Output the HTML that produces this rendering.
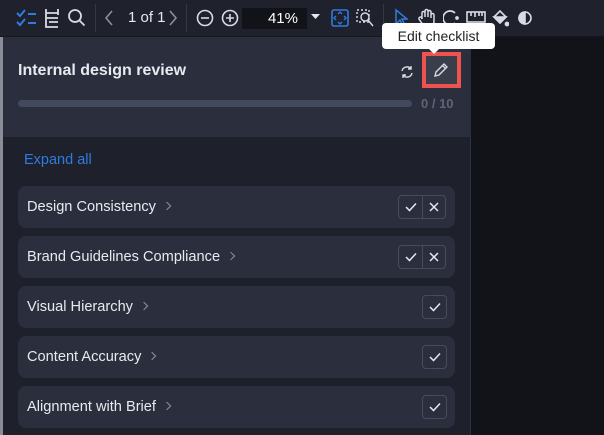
<!DOCTYPE html>
<html><head><style>
*{margin:0;padding:0;box-sizing:border-box}
body{width:604px;height:435px;overflow:hidden;background:#111318;font-family:"Liberation Sans",sans-serif;position:relative;color:#e6e8ee}
.tb{position:absolute;left:0;top:0;width:604px;height:37px;background:#1f222c;border-bottom:1px solid #15171d}
.sep{position:absolute;top:4px;width:1px;height:28px;background:#333847}
.ic{position:absolute;top:8px}
.panel{position:absolute;left:3px;top:37px;width:468px;height:398px;background:#1e212b;border-right:1px solid #2e3240}
.lstrip{position:absolute;left:0;top:37px;width:3px;height:398px;background:#8a8d95}
.hdr{position:absolute;left:0;top:0;width:468px;height:100px;background:#2b2f3d}
.title{position:absolute;left:15px;top:25px;font-size:16px;font-weight:bold;color:#e8eaf0}
.bar{position:absolute;left:15px;top:63px;width:394px;height:7px;border-radius:4px;background:#434a5e}
.cnt{position:absolute;left:418px;top:59px;font-size:13px;font-weight:bold;color:#5d6477}
.exp{position:absolute;left:21px;top:115px;font-size:14.5px;color:#2f7be0}
.card{position:absolute;left:15px;width:437px;height:42px;border-radius:8px;background:#2b2f3d}
.card span{position:absolute;left:9px;top:13px;font-size:14.6px;color:#e8eaf0}
.card span:after{content:"";display:inline-block;width:5px;height:5px;border-right:1.3px solid #8a90a0;border-top:1.3px solid #8a90a0;transform:rotate(45deg);margin-left:8px;position:relative;top:-2px}
.bg{position:absolute;top:9px;height:24px;border:1px solid #474c5a;border-radius:4px;display:flex}
.bg div{width:23px;height:22px;display:flex;align-items:center;justify-content:center}
.bg div+div{border-left:1px solid #474c5a}
.tip{position:absolute;left:382px;top:23px;width:113px;height:26px;background:#fff;border-radius:4px;color:#222;font-size:14px;text-align:center;line-height:26px}
.tip:after{content:"";position:absolute;left:47px;bottom:-5px;border:5px solid transparent;border-top-color:#fff;border-bottom:0}
.red{position:absolute;left:422px;top:52px;width:39px;height:36px;border:4px solid #ef5350;background:#3a3e4b}
</style></head><body>
<div class="tb">
<svg class="ic" style="left:16px" width="22" height="20" viewBox="0 0 22 20" fill="none" stroke="#2f7be0" stroke-width="2"><path d="M1 5l3 3 5-6M1 14l3 3 5-6M12 6h8M12 15h8"/></svg>
<svg class="ic" style="left:44px" width="16" height="20" viewBox="0 0 16 20" fill="none" stroke="#d8dbe3" stroke-width="1.8"><path d="M2 1v18h12M2 5h12M2 10h12M14 1v6M5 14h9"/></svg>
<svg class="ic" style="left:68px" width="18" height="20" viewBox="0 0 18 20" fill="none" stroke="#d8dbe3" stroke-width="1.8"><circle cx="7" cy="8" r="6"/><path d="M11.5 12.5l5 5"/></svg>
<div class="sep" style="left:95px"></div>
<svg class="ic" style="left:104px" width="10" height="20" viewBox="0 0 10 20" fill="none" stroke="#8a8f9c" stroke-width="1.6"><path d="M8 3L2 10l6 7"/></svg>
<div style="position:absolute;left:128px;top:9px;font-size:15px;color:#e6e8ee">1 of 1</div>
<svg class="ic" style="left:168px" width="10" height="20" viewBox="0 0 10 20" fill="none" stroke="#8a8f9c" stroke-width="1.6"><path d="M2 3l6 7-6 7"/></svg>
<div class="sep" style="left:186px"></div>
<svg class="ic" style="left:196px" width="18" height="20" viewBox="0 0 18 20" fill="none" stroke="#d8dbe3" stroke-width="1.6"><circle cx="9" cy="10" r="7.5"/><path d="M5 10h8"/></svg>
<svg class="ic" style="left:221px" width="18" height="20" viewBox="0 0 18 20" fill="none" stroke="#d8dbe3" stroke-width="1.6"><circle cx="9" cy="10" r="7.5"/><path d="M5 10h8M9 6v8"/></svg>
<div style="position:absolute;left:242px;top:8px;width:65px;height:21px;background:#111318;color:#fff;font-size:15px;text-align:right;padding-right:9px;line-height:21px">41%</div>
<svg class="ic" style="left:311px;top:14px" width="9" height="6"><path d="M0 0h9L4.5 5z" fill="#e6e8ee"/></svg>
<svg class="ic" style="left:331px" width="18" height="20" viewBox="0 0 18 20" fill="none" stroke="#2f7be0" stroke-width="1.6"><rect x="1" y="2" width="16" height="16" rx="2"/><path d="M7 6l2-2 2 2M7 14l2 2 2-2M5 8l-2 2 2 2M13 8l2 2-2 2" stroke-width="1.3"/></svg>
<svg class="ic" style="left:356px" width="18" height="20" viewBox="0 0 18 20" fill="none" stroke="#d8dbe3" stroke-width="1.4"><rect x="1" y="2" width="12" height="12" stroke-dasharray="2 2"/><circle cx="9" cy="9" r="4"/><path d="M12 12l5 6"/></svg>
<div class="sep" style="left:383px"></div>
<svg class="ic" style="left:394px" width="14" height="20" viewBox="0 0 14 20" fill="none" stroke="#2f7be0" stroke-width="1.5"><path d="M2 2v14l4-4 3 6 2-1-3-6h5z"/></svg>
<svg class="ic" style="left:418px" width="18" height="20" viewBox="0 0 18 20" fill="none" stroke="#d8dbe3" stroke-width="1.5"><path d="M4 11V5a1.5 1.5 0 013 0v4V3a1.5 1.5 0 013 0v6V4a1.5 1.5 0 013 0v6V7a1.5 1.5 0 013 0v6c0 4-3 6-6 6s-5-2-7-5l-2-3a1.5 1.5 0 012.5-1.5z"/></svg>
<svg class="ic" style="left:443px" width="16" height="20" viewBox="0 0 16 20" fill="none" stroke="#d8dbe3" stroke-width="1.7"><path d="M12 5A7 7 0 1012 15" /><circle cx="14" cy="10" r="1" fill="#d8dbe3"/></svg>
<svg class="ic" style="left:466px;top:11px" width="20" height="12" viewBox="0 0 20 12" fill="none" stroke="#d8dbe3" stroke-width="1.6"><rect x="1" y="1" width="18" height="10"/><path d="M5 1v4M9 1v5M13 1v4M16 1v4"/></svg>
<svg class="ic" style="left:491px" width="18" height="20" viewBox="0 0 18 20" fill="none" stroke="#d8dbe3" stroke-width="1.6"><path d="M3 9l6-6 6 6-6 6z"/><path d="M3 9h12l-6 6z" fill="#d8dbe3"/><circle cx="16" cy="16" r="1.6" fill="#d8dbe3"/></svg>
<svg class="ic" style="left:517px" width="16" height="20" viewBox="0 0 16 20" fill="none" stroke="#d8dbe3" stroke-width="1.6"><circle cx="8" cy="10" r="6"/><path d="M8 4a6 6 0 000 12z" fill="#d8dbe3"/></svg>
</div>
<div class="lstrip"></div>
<div class="panel">
<div class="hdr">
<div class="title">Internal design review</div>
<svg style="position:absolute;left:397px;top:28px" width="14" height="14" viewBox="0 0 14 14" fill="none" stroke="#d8dbe3" stroke-width="1.4"><path d="M2 6a5 5 0 019-2M12 8a5 5 0 01-9 2M11 1v3H8M3 13v-3h3"/></svg>
<div class="bar"></div>
<div class="cnt">0 / 10</div>
</div>
<div class="exp">Expand all</div>
<div class="card" style="top:149px"><span>Design Consistency</span><div class="bg" style="left:380px"><div><svg width="12" height="10"><path d="M1 5l3.5 3.5L11 1.5" stroke="#e6e8ee" stroke-width="1.5" fill="none"/></svg></div><div><svg width="10" height="10"><path d="M1 1l8 8M9 1l-8 8" stroke="#e6e8ee" stroke-width="1.5"/></svg></div></div></div>
<div class="card" style="top:199px"><span>Brand Guidelines Compliance</span><div class="bg" style="left:380px"><div><svg width="12" height="10"><path d="M1 5l3.5 3.5L11 1.5" stroke="#e6e8ee" stroke-width="1.5" fill="none"/></svg></div><div><svg width="10" height="10"><path d="M1 1l8 8M9 1l-8 8" stroke="#e6e8ee" stroke-width="1.5"/></svg></div></div></div>
<div class="card" style="top:249px"><span>Visual Hierarchy</span><div class="bg" style="left:404px"><div><svg width="12" height="10"><path d="M1 5l3.5 3.5L11 1.5" stroke="#e6e8ee" stroke-width="1.5" fill="none"/></svg></div></div></div>
<div class="card" style="top:299px"><span>Content Accuracy</span><div class="bg" style="left:404px"><div><svg width="12" height="10"><path d="M1 5l3.5 3.5L11 1.5" stroke="#e6e8ee" stroke-width="1.5" fill="none"/></svg></div></div></div>
<div class="card" style="top:349px"><span>Alignment with Brief</span><div class="bg" style="left:404px"><div><svg width="12" height="10"><path d="M1 5l3.5 3.5L11 1.5" stroke="#e6e8ee" stroke-width="1.5" fill="none"/></svg></div></div></div>
</div>
<div class="red"><svg style="position:absolute;left:7px;top:6px" width="16" height="16" viewBox="0 0 16 16" fill="none" stroke="#d8dbe3" stroke-width="1.4"><path d="M2 14l1-4 8-8 3 3-8 8zM9.5 3.5l3 3"/></svg></div>
<div class="tip">Edit checklist</div>
</body></html>
